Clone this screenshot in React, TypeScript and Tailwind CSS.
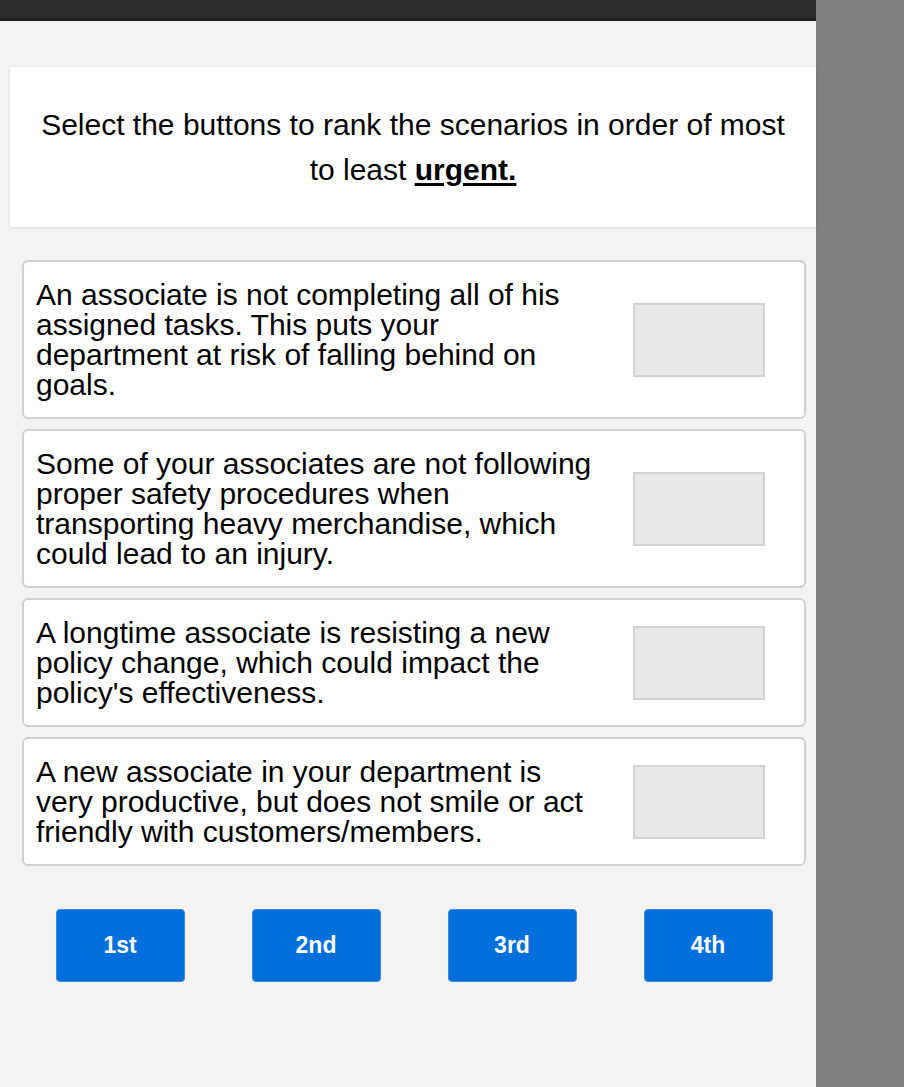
const scenarios = [
  "An associate is not completing all of his assigned tasks. This puts your department at risk of falling behind on goals.",
  "Some of your associates are not following proper safety procedures when transporting heavy merchandise, which could lead to an injury.",
  "A longtime associate is resisting a new policy change, which could impact the policy's effectiveness.",
  "A new associate in your department is very productive, but does not smile or act friendly with customers/members.",
];

const ranks = ["1st", "2nd", "3rd", "4th"];

export default function App() {
  return (
    <div className="flex h-[1087px] w-[904px] overflow-hidden bg-[#808080] font-['Liberation_Sans',Arial,sans-serif] text-black">
      <div className="flex w-[816px] flex-col bg-[#f3f3f3]">
        {/* top bar */}
        <div className="h-[21px] border-b-[3px] border-[#1e1e1e] bg-[#2d2d2d]" />

        {/* instructions */}
        <div className="mt-[46px] ml-[10px] bg-white px-[24px] pt-[35px] pb-[35px] text-center text-[30px] leading-[45px] shadow-[0_1px_3px_rgba(0,0,0,0.12)]">
          Select the buttons to rank the scenarios in order of most to least{" "}
          <span className="font-bold underline underline-offset-[3px]">urgent.</span>
        </div>

        {/* scenario cards */}
        <div className="mt-[33px] ml-[22px] flex w-[784px] flex-col gap-[10px]">
          {scenarios.map((text, i) => (
            <div
              key={i}
              className="flex items-center justify-between rounded-[6px] border-2 border-[#d0d0d0] bg-white pt-[18px] pb-[17px] pl-[12px] pr-[39px]"
            >
              <p className="w-[559px] text-[30px] leading-[30px]">{text}</p>
              <div className="h-[74px] w-[132px] border-2 border-[#d2d2d2] bg-[#e8e8e8]" />
            </div>
          ))}
        </div>

        {/* rank buttons */}
        <div className="mt-[43px] ml-[22px] grid w-[784px] grid-cols-4">
          {ranks.map((r) => (
            <div key={r} className="flex justify-center">
              <button className="h-[73px] w-[129px] rounded-[4px] border border-[#3a8ae0] bg-[#006fdc] text-[23px] font-bold text-white">
                {r}
              </button>
            </div>
          ))}
        </div>
      </div>
    </div>
  );
}
